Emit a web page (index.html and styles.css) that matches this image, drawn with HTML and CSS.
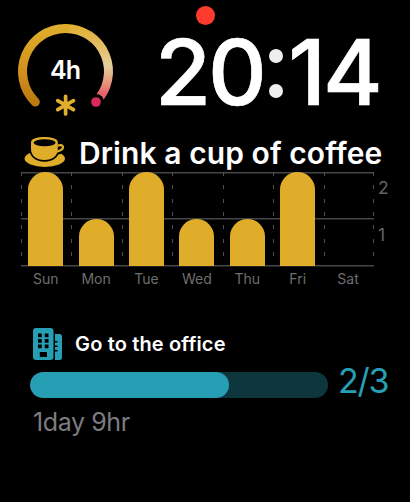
FILE: index.html
```
<!DOCTYPE html>
<html lang="en">
<head>
<meta charset="utf-8">
<title>Watch face</title>
<link rel="stylesheet" href="styles.css">
</head>
<body>
<main class="face">
  <span class="status-dot"></span>
  <header class="top">
    <div class="gauge">
      <svg width="100" height="100" viewBox="15 20 100 100">
        <defs>
          <linearGradient id="rise" gradientUnits="userSpaceOnUse" x1="0" y1="106" x2="0" y2="24">
            <stop offset="0" stop-color="#b87710"/><stop offset=".4" stop-color="#d18f1b"/><stop offset="1" stop-color="#e0b02c"/>
          </linearGradient>
          <linearGradient id="fall" gradientUnits="userSpaceOnUse" x1="0" y1="24" x2="0" y2="100">
            <stop offset="0" stop-color="#e0b02c"/><stop offset=".22" stop-color="#e3b857"/><stop offset=".55" stop-color="#e4d09a"/><stop offset=".76" stop-color="#e49a7c"/><stop offset=".92" stop-color="#e8606a"/>
          </linearGradient>
        </defs>
        <g fill="none" stroke-width="9">
          <path stroke="url(#fall)" d="M65.2 28.4A43 43 0 0 1 95.7 102"/>
          <path stroke="url(#rise)" stroke-linecap="round" d="M35.3 102A43 43 0 0 1 65.5 28.4"/>
        </g>
        <circle cx="96" cy="102" r="8"/>
        <circle cx="96" cy="102" r="4.8" fill="#d92b59"/>
        <path d="M65.6 96.3V114M57.7 100.6l15.8 9.1M73.5 100.6l-15.8 9.1" stroke="#e0ae2c" stroke-width="3.7" stroke-linecap="round"/>
      </svg>
      <span class="gauge-value">4h</span>
    </div>
    <time class="clock">20<span class="colon"><i></i><i></i></span>14</time>
  </header>

  <section class="coffee">
    <h1 class="coffee-title">
      <svg width="42" height="34" viewBox="24 135 42 34">
        <ellipse cx="44.8" cy="158.6" rx="20.2" ry="8.3" fill="#dfad2a"/>
        <path d="M29.500 142v8c0 6.500 6 11.700 15 11.700S59.300 156.500 59.300 150v-8z" fill="#000"/>
        <path d="M57 145.500c7-2 8 4 3 5.800l-4 1.200" fill="none" stroke="#000" stroke-width="5.400"/>
        <path d="M57.500 145.700c6-2.400 7.500 3.200 2.500 4.800l-4 1.500" fill="none" stroke="#dfad2a" stroke-width="2.300"/>
        <path d="M31 142c0-6.800 26.800-6.800 26.800 0v7c0 6.800-5.200 11-13.400 11S31 155.800 31 149z" fill="#dfad2a"/>
        <ellipse cx="44.600" cy="142.800" rx="11" ry="3.500" fill="#000"/>
      </svg>
      <span>Drink a cup of coffee</span>
    </h1>
    <div class="chart">
      <div class="plot">
        <div class="slot"><b class="bar full"></b></div>
        <div class="slot"><b class="bar half"></b></div>
        <div class="slot"><b class="bar full"></b></div>
        <div class="slot"><b class="bar half"></b></div>
        <div class="slot"><b class="bar half"></b></div>
        <div class="slot"><b class="bar full"></b></div>
        <div class="slot last"></div>
      </div>
      <div class="scale"><span>2</span><span>1</span></div>
      <div class="days"><span>Sun</span><span>Mon</span><span>Tue</span><span>Wed</span><span>Thu</span><span>Fri</span><span>Sat</span></div>
    </div>
  </section>

  <section class="office">
    <h2 class="office-title">
      <svg width="30" height="34" viewBox="33 327 30 34">
        <rect x="33" y="328" width="20.500" height="32" rx="3" fill="#269fb5"/>
        <path d="M55 334h4.500q2.500 0 2.500 2.500v21q0 2.500-2.500 2.500H55z" fill="#269fb5"/>
        <path d="M38 333.500h3.800v3.800h-3.800zM44.700 333.500h3.800v3.800h-3.800zM38 339h3.800v3.800h-3.800zM44.700 339h3.800v3.800h-3.800zM38 344.500h3.800v3.800h-3.800zM44.700 344.500h3.800v3.800h-3.800zM39.800 352h7.200v5h-7.200zM54.500 341h3v1.500h-3zM54.500 345.500h3v1.500h-3zM54.500 350h3v1.500h-3z"/>
      </svg>
      <span>Go to the office</span>
    </h2>
    <div class="progress-row">
      <div class="track"><div class="fill"></div></div>
      <span class="count">2/3</span>
    </div>
    <p class="remaining">1day 9hr</p>
  </section>
</main>
</body>
</html>
```
FILE: styles.css
```
* { box-sizing: border-box; }
body { margin: 0; background: #000; }
.face {
  position: relative;
  width: 410px;
  height: 502px;
  overflow: hidden;
  background: #000;
  color: #fff;
  font-family: Inter, "Liberation Sans", sans-serif;
}
svg { display: block; flex: none; }
.status-dot {
  position: absolute;
  left: 196px;
  top: 6px;
  width: 19px;
  height: 19px;
  border-radius: 50%;
  background: #ff3b30;
}
.top { display: flex; height: 135px; padding: 20px 0 0 15px; }
.gauge { position: relative; width: 100px; height: 100px; }
.gauge-value {
  position: absolute;
  left: 0;
  top: 35px;
  width: 100px;
  text-align: center;
  font-size: 25px;
  line-height: 30px;
  font-weight: 600;
  letter-spacing: -1px;
}
.clock {
  display: flex;
  height: 66px;
  margin: 19px 0 0 40px;
  font-size: 91px;
  line-height: 66px;
  font-weight: 550;
  letter-spacing: -3px;
  -webkit-text-stroke: .7px #fff;
}
.colon {
  display: flex;
  flex-direction: column;
  gap: 20.5px;
  width: 24.5px;
  padding: 10px 0 0 5px;
}
.colon i { width: 14px; height: 14px; border-radius: 50%; background: #eee; }
h1, h2, p { margin: 0; }
.coffee-title {
  display: flex;
  height: 37px;
  padding-left: 24px;
  gap: 13px;
  font-size: 30px;
  line-height: 36px;
  font-weight: 600;
  letter-spacing: .08px;
  white-space: nowrap;
}
.chart {
  display: grid;
  grid-template-columns: 353px 20px;
  grid-template-rows: 94px 26px;
  padding-left: 21px;
}
.plot {
  display: grid;
  grid-template-columns: repeat(7, 1fr);
  height: 95px;
  background: linear-gradient(#464646, #464646) 0 0 / 100% 1.5px no-repeat,
    linear-gradient(#464646, #464646) 0 46.5px / 100% 1.5px no-repeat,
    linear-gradient(#464646, #464646) 0 93.5px / 100% 1.5px no-repeat;
  margin-top: -.5px;
}
.slot {
  display: flex;
  align-items: flex-end;
  padding: 0 0 1px 7.2px;
  background: repeating-linear-gradient(#505050 0 4px, transparent 4px 13.35px) 0 .5px / 1px 86px no-repeat;
}
.last {
  background: repeating-linear-gradient(#505050 0 4px, transparent 4px 13.35px) 0 .5px / 1px 86px no-repeat,
    repeating-linear-gradient(#505050 0 4px, transparent 4px 13.35px) 100% .5px / 1px 86px no-repeat;
}
.bar { width: 35px; background: #dfad2a; border-radius: 17.5px 17.5px 0 0; }
.full { height: 93.5px; }
.half { height: 47px; }
.scale { padding: 6px 0 0 4px; color: #636366; font-size: 17.5px; line-height: 20px; }
.scale span { display: block; height: 47px; }
.days {
  display: grid;
  grid-template-columns: repeat(7, 50.4px);
  padding-top: 4px;
  text-align: center;
  color: #6e6e6e;
  font-size: 14px;
  line-height: 18px;
}
.days span { padding-right: 1px; }
.office { padding: 35px 0 0 30px; }
.office-title {
  display: flex;
  height: 44px;
  padding-left: 3px;
  gap: 12px;
  font-size: 20px;
  line-height: 34px;
  font-weight: 600;
  letter-spacing: .15px;
  white-space: nowrap;
}
.progress-row { display: flex; align-items: center; height: 27px; gap: 10px; }
.track { width: 298px; height: 26px; border-radius: 13px; overflow: hidden; background: #0e363d; }
.fill { width: 199px; height: 26px; border-radius: 13px; background: #269fb5; }
.count { color: #269fb5; font-size: 34px; line-height: 26px; letter-spacing: -1.2px; margin-top: -8px; }
.remaining { margin-top: 8px; padding-left: 3px; color: #7c7c80; font-size: 25px; line-height: 32px; letter-spacing: -.4px; }
```
